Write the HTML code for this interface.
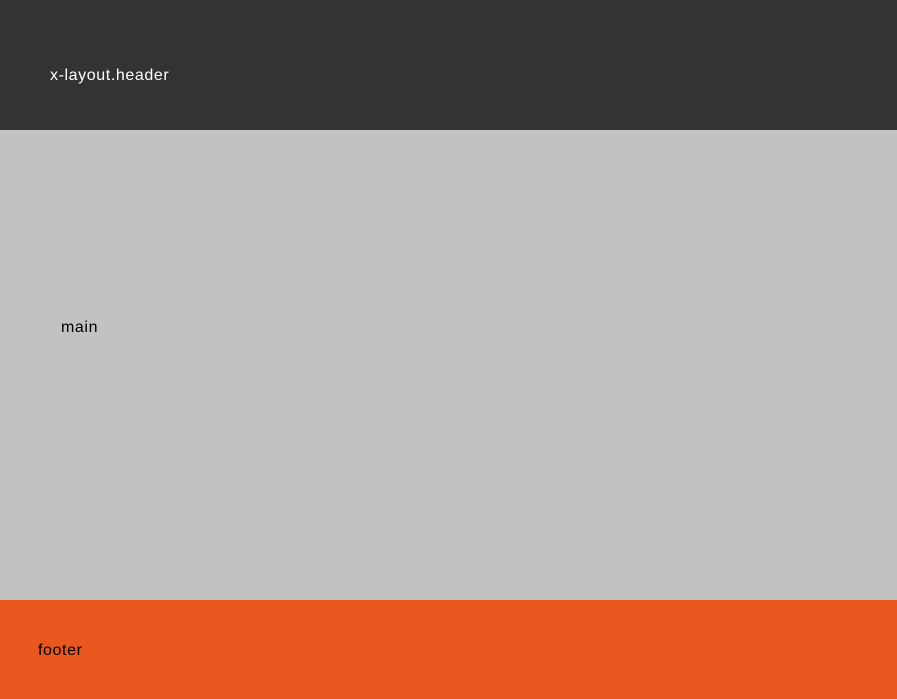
<!DOCTYPE html>
<html><head><style>
html,body{margin:0;padding:0;width:897px;height:699px;overflow:hidden;font-family:"Liberation Sans",sans-serif;font-size:16px;letter-spacing:0.6px;}
.h{position:absolute;left:0;top:0;width:897px;height:130px;background:#333333;color:#fff;}
.m{position:absolute;left:0;top:130px;width:897px;height:470px;background:#c2c2c2;color:#000;}
.f{position:absolute;left:0;top:600px;width:897px;height:99px;background:#e9571f;color:#000;}
span{position:absolute;}
</style></head><body>
<div class="h"><span style="left:50px;top:67px">x-layout.header</span></div>
<div class="m"><span style="left:61px;top:189px">main</span></div>
<div class="f"><span style="left:38px;top:42px">footer</span></div>
</body></html>
